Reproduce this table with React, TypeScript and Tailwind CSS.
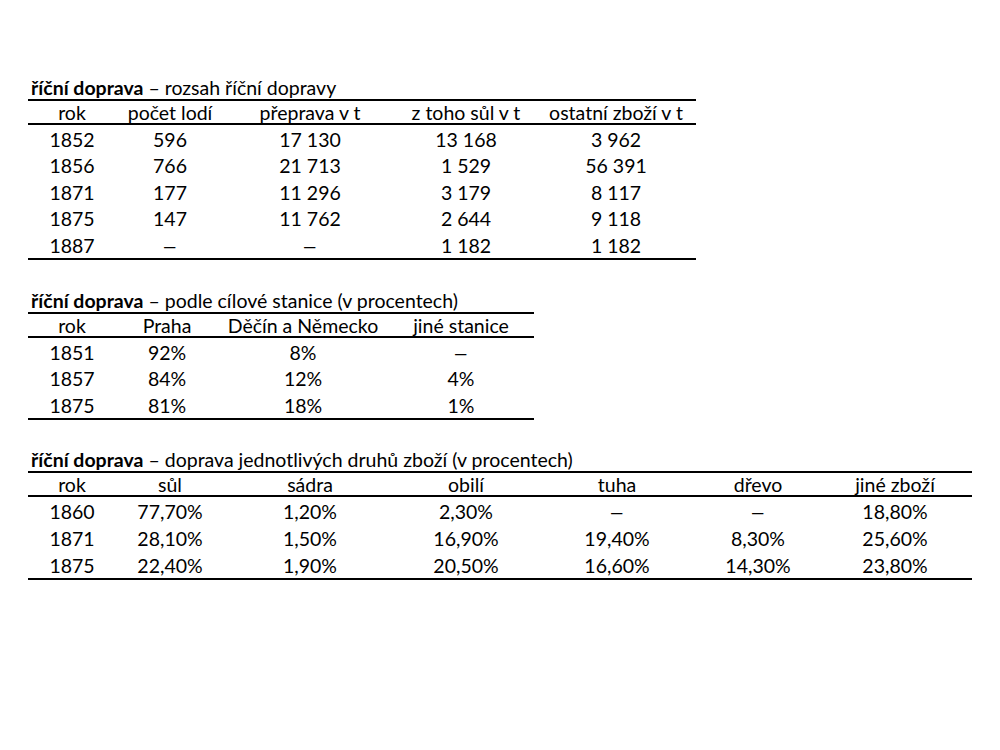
import React from "react";

type T = {
  rest: string;
  width: string;
  grid: string;
  rowH: string;
  mt: string;
  header: string[];
  rows: string[][];
};

const tables: T[] = [
  {
    rest: " – rozsah říční dopravy",
    width: "w-[668px]",
    grid: "grid-cols-[88px_108px_172px_140px_160px]",
    rowH: "h-[26.6px]",
    mt: "mt-[76px]",
    header: ["rok", "počet lodí", "přeprava v t", "z toho sůl v t", "ostatní zboží v t"],
    rows: [
      ["1852", "596", "17 130", "13 168", "3 962"],
      ["1856", "766", "21 713", "1 529", "56 391"],
      ["1871", "177", "11 296", "3 179", "8 117"],
      ["1875", "147", "11 762", "2 644", "9 118"],
      ["1887", "–", "–", "1 182", "1 182"],
    ],
  },
  {
    rest: " – podle cílové stanice (v procentech)",
    width: "w-[506px]",
    grid: "grid-cols-[88px_102px_170px_146px]",
    rowH: "h-[26.7px]",
    mt: "mt-[29px]",
    header: ["rok", "Praha", "Děčín a Německo", "jiné stanice"],
    rows: [
      ["1851", "92%", "8%", "–"],
      ["1857", "84%", "12%", "4%"],
      ["1875", "81%", "18%", "1%"],
    ],
  },
  {
    rest: " – doprava jednotlivých druhů zboží (v procentech)",
    width: "w-[944px]",
    grid: "grid-cols-[88px_108px_172px_140px_162px_120px_154px]",
    rowH: "h-[27px]",
    mt: "mt-[28px]",
    header: ["rok", "sůl", "sádra", "obilí", "tuha", "dřevo", "jiné zboží"],
    rows: [
      ["1860", "77,70%", "1,20%", "2,30%", "–", "–", "18,80%"],
      ["1871", "28,10%", "1,50%", "16,90%", "19,40%", "8,30%", "25,60%"],
      ["1875", "22,40%", "1,90%", "20,50%", "16,60%", "14,30%", "23,80%"],
    ],
  },
];

function Cell({ children }: { children: string }) {
  return (
    <div className="flex items-center justify-center whitespace-nowrap pt-[2px]">
      {children === "–" ? <span className="inline-block scale-x-[1.45]">–</span> : children}
    </div>
  );
}

function Table({ t }: { t: T }) {
  return (
    <section className={`${t.mt} ${t.width}`}>
      <div className="h-[23px] leading-[23px] pl-[3px] whitespace-nowrap">
        <span className="font-bold">říční doprava</span>
        <span>{t.rest}</span>
      </div>
      <div className="border-t-2 border-b-2 border-black">
        <div className={`grid ${t.grid} h-[24px] border-b-2 border-black`}>
          {t.header.map((h, i) => (
            <Cell key={i}>{h}</Cell>
          ))}
        </div>
        {t.rows.map((r, ri) => (
          <div key={ri} className={`grid ${t.grid} ${t.rowH}`}>
            {r.map((c, i) => (
              <Cell key={i}>{c}</Cell>
            ))}
          </div>
        ))}
      </div>
    </section>
  );
}

export default function App() {
  return (
    <main className="w-[1000px] h-[750px] bg-white text-black text-[19.5px] leading-none pl-[28px] overflow-hidden font-['Lato',sans-serif]">
      {tables.map((t, i) => (
        <Table key={i} t={t} />
      ))}
    </main>
  );
}
